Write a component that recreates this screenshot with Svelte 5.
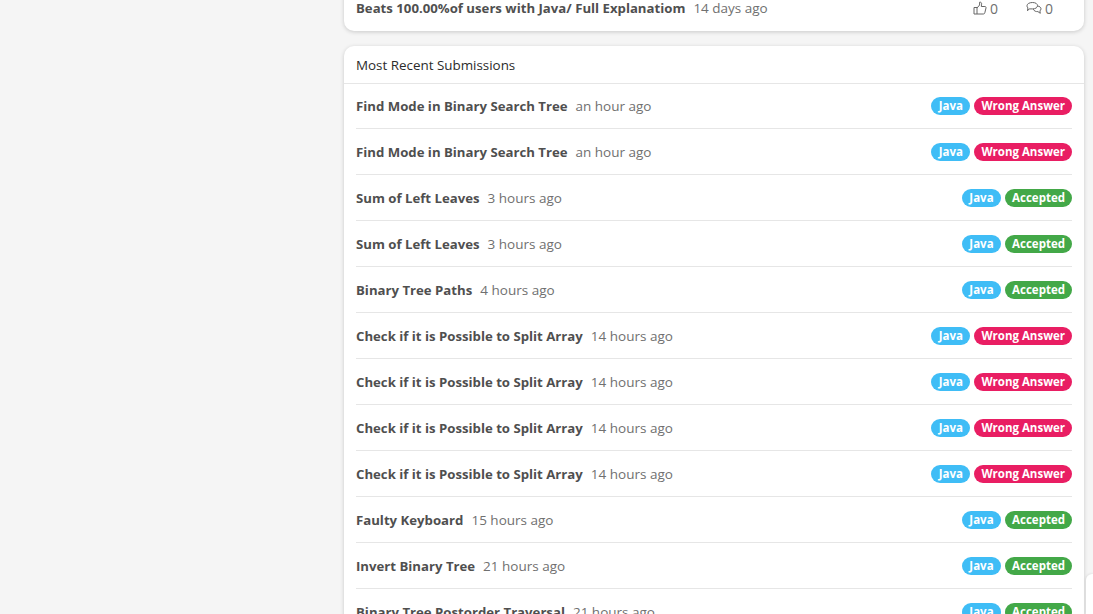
<script>
	const rows = [
		{ title: 'Find Mode in Binary Search Tree', time: 'an hour ago', ok: false },
		{ title: 'Find Mode in Binary Search Tree', time: 'an hour ago', ok: false },
		{ title: 'Sum of Left Leaves', time: '3 hours ago', ok: true },
		{ title: 'Sum of Left Leaves', time: '3 hours ago', ok: true },
		{ title: 'Binary Tree Paths', time: '4 hours ago', ok: true },
		{ title: 'Check if it is Possible to Split Array', time: '14 hours ago', ok: false },
		{ title: 'Check if it is Possible to Split Array', time: '14 hours ago', ok: false },
		{ title: 'Check if it is Possible to Split Array', time: '14 hours ago', ok: false },
		{ title: 'Check if it is Possible to Split Array', time: '14 hours ago', ok: false },
		{ title: 'Faulty Keyboard', time: '15 hours ago', ok: true },
		{ title: 'Invert Binary Tree', time: '21 hours ago', ok: true },
		{ title: 'Binary Tree Postorder Traversal', time: '21 hours ago', ok: true }
	];
</script>

<div class="page">
	<main>
		<section class="card top">
			<div class="post">
				<div class="left">
					<span class="title">Beats 100.00%of users with Java/ Full Explanatiom</span>
					<span class="time">14 days ago</span>
				</div>
				<div class="stats">
					<span class="stat">
						<svg width="14" height="14" viewBox="0 0 14 14" fill="none" stroke="#666" stroke-width="1">
							<path d="M1 6.500h3v6.500H1zM4 7l2.600-3V1.200c1.300-.3 2.200.6 2 2L8.300 5.500h3.600c.9 0 1.300.7 1.100 1.500l-1.200 4.800c-.2.700-.6 1.200-1.400 1.200H4" />
						</svg>
						0
					</span>
					<span class="stat">
						<svg width="16" height="14" viewBox="0 0 16 14" fill="none" stroke="#666" stroke-width="1">
							<path d="M6.500 1.500c3 0 5 1.300 5 3.200s-2 3.200-5 3.200H3.200L1.500 9.800l.4-2.900C1.200 6.300 1 5.500 1 4.700c0-1.900 2.500-3.200 5.500-3.200z" />
							<path d="M11.600 5c1.900.3 3.400 1.300 3.400 2.800 0 .9-.4 1.600-1.100 2.100l.4 2.400-2.400-1.700c-1.900.1-3.800-.4-4.700-2.500" />
						</svg>
						0
					</span>
				</div>
			</div>
		</section>

		<section class="card recent">
			<h2>Most Recent Submissions</h2>
			<ul>
				{#each rows as row}
					<li>
						<div class="left">
							<span class="title">{row.title}</span>
							<span class="time">{row.time}</span>
						</div>
						<div class="badges">
							<span class="badge java">Java</span>
							{#if row.ok}
								<span class="badge ok">Accepted</span>
							{:else}
								<span class="badge bad">Wrong Answer</span>
							{/if}
						</div>
					</li>
				{/each}
			</ul>
		</section>
	</main>
	<div class="corner"></div>
</div>

<style>
	:global(body) {
		margin: 0;
		background: #f5f5f5;
		overflow: hidden;
	}

	.page {
		height: 614px;
		overflow: hidden;
		position: relative;
		font-family: 'Open Sans', 'Noto Sans', sans-serif;
		color: #444;
	}

	main {
		width: 740px;
		margin-left: 344px;
		margin-top: -15px;
	}

	.card {
		background: #fff;
		border-radius: 10px;
		box-shadow: 0 1px 4px rgba(0, 0, 0, 0.18);
		padding: 0 12px;
	}

	.top {
		margin-bottom: 15px;
	}

	.post {
		display: flex;
		justify-content: space-between;
		align-items: center;
		height: 46px;
	}

	.left {
		display: flex;
		align-items: baseline;
		gap: 8px;
	}

	.title {
		font-size: 13.2px;
		font-weight: 700;
		color: #4f4f4f;
	}

	.time {
		font-size: 13.5px;
		color: #707070;
	}

	.stats {
		display: flex;
		gap: 28px;
		margin-right: 19px;
	}

	.stat {
		display: flex;
		align-items: center;
		gap: 3px;
		font-size: 14px;
		color: #707070;
	}

	h2 {
		margin: 0 -12px;
		padding: 0 12px;
		height: 37px;
		line-height: 38px;
		font-size: 13.4px;
		font-weight: 500;
		color: #2b2b2b;
		border-bottom: 1px solid #e6e6e6;
	}

	ul {
		list-style: none;
		margin: -1px 0 0;
		padding: 0;
	}

	li {
		display: flex;
		justify-content: space-between;
		align-items: center;
		height: 45px;
		border-bottom: 1px solid #e6e6e6;
	}

	.badges {
		display: flex;
		gap: 4px;
	}

	.badge {
		height: 18px;
		line-height: 18px;
		padding: 0 7px;
		border-radius: 9px;
		font-size: 11.5px;
		font-weight: 700;
		color: #fff;
	}

	.java {
		padding: 0 7.5px;
		background: #3fbdf6;
	}

	.ok {
		background: #43a848;
	}

	.bad {
		background: #e91e63;
	}

	.corner {
		position: absolute;
		right: 0;
		top: 574px;
		width: 7px;
		height: 40px;
		background: #fff;
		border-top-left-radius: 6px;
		box-shadow: 0 0 3px rgba(0, 0, 0, 0.15);
	}
</style>
